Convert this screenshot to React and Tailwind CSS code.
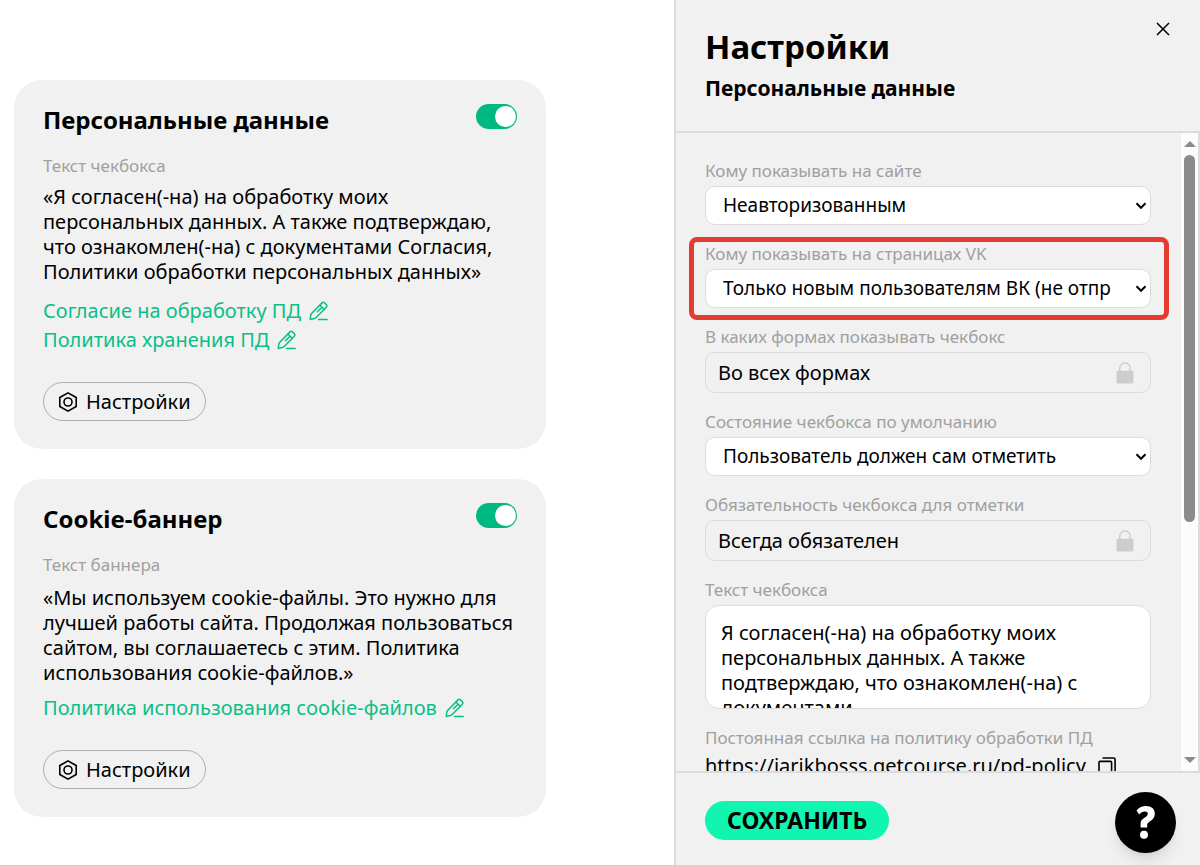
import React, { useState } from 'react';

const PencilIcon = () => (
  <svg className="h-5 w-5 shrink-0" viewBox="0 0 20 20" fill="none" stroke="currentColor" strokeWidth="1.5" strokeLinecap="round" strokeLinejoin="round">
    <path d="M1.2 18.4l.6-4.2a3.4 3.4 0 0 1 1-2L13 1.9a1.8 1.8 0 0 1 2.6 0l1.7 1.7a1.8 1.8 0 0 1 0 2.6L7.2 16.6a3.4 3.4 0 0 1-2 1z" />
    <path d="M11 4.2l4.2 4.2M8.4 10.8l3.6-3.6M9.6 18.6h8.6" />
  </svg>
);

const NutIcon = () => (
  <svg className="h-5 w-5 shrink-0" viewBox="0 0 20 20" fill="none" stroke="currentColor" strokeWidth="1.6" strokeLinejoin="round">
    <path d="M10 .9l8.2 4.6v9L10 19.1l-8.2-4.6v-9z" />
    <circle cx="10" cy="10" r="4" />
  </svg>
);

const LockIcon = () => (
  <svg className="h-[22px] w-[18px] shrink-0" viewBox="0 0 18 22" fill="none">
    <path d="M3.8 10V6.2a5.2 5.2 0 0 1 10.4 0V10" stroke="#cdcdcd" strokeWidth="1.4" />
    <rect x="0.5" y="8.8" width="17" height="12.7" rx="1.4" fill="#cdcdcd" />
  </svg>
);

const CopyIcon = () => (
  <svg className="h-[18px] w-[18px] shrink-0" viewBox="0 0 18 18" fill="none" stroke="currentColor" strokeWidth="1.6">
    <path d="M4.5 1h11a1.6 1.6 0 0 1 1.6 1.6V14" />
    <rect x="1" y="4.4" width="12.6" height="12.6" rx="1" />
  </svg>
);

const PolicyLink = ({ children }) => (
  <a href="#" className="flex items-center gap-2 text-xl leading-[29px] text-[#0abf86]">
    {children}
    <PencilIcon />
  </a>
);

const Card = ({ id, title, children }) => {
  const [enabled, setEnabled] = useState(true);

  return (
    <section className="rounded-[28px] bg-[#f1f1f1] px-[29px] pt-6 pb-7">
      <div className="flex items-start justify-between">
        <label htmlFor={id} className="text-2xl font-bold">{title}</label>
        <input
          id={id}
          type="checkbox"
          checked={enabled}
          onChange={() => setEnabled(!enabled)}
          className="h-[25px] w-[41px] appearance-none rounded-full bg-gray-400 p-0.5 before:block before:h-[21px] before:w-[21px] before:rounded-full before:bg-white checked:bg-[#00b981] checked:before:ml-[17px]"
        />
      </div>
      {children}
      <button className="mt-7 flex h-[39px] items-center gap-2 rounded-full border border-[#adadad] px-[14px] text-xl">
        <NutIcon />
        Настройки
      </button>
    </section>
  );
};

const Field = ({ id, label, highlighted, children }) => (
  <div className="relative flex flex-col gap-1">
    <label htmlFor={id} className="text-[17px] leading-[22px] text-[#a0a0a0]">{label}</label>
    {children}
    {highlighted && (
      <div className="pointer-events-none absolute -top-1.5 -right-[18px] -bottom-3 -left-4 rounded-lg border-5 border-[#e63b31]" />
    )}
  </div>
);

const SelectBox = ({ id, value }) => (
  <div className="relative">
    <select id={id} className="block h-[39px] w-full appearance-none rounded-[10px] border border-[#dcdcdc] bg-white pr-6 pl-[17px] text-[19px]">
      <option>{value}</option>
    </select>
    <svg className="pointer-events-none absolute top-4 right-1 h-2 w-3" viewBox="0 0 12 8" fill="none" stroke="black" strokeWidth="2">
      <path d="M1.5 1.3L6 5.8l4.5-4.5" />
    </svg>
  </div>
);

const LockedBox = ({ id, value }) => (
  <div className="flex h-[41px] items-center rounded-[10px] border border-[#dcdcdc] pr-4 pl-3">
    <input id={id} readOnly value={value} className="min-w-0 flex-1 bg-transparent text-xl outline-none" />
    <LockIcon />
  </div>
);

const SettingsPanel = () => (
  <aside className="flex w-[526px] shrink-0 flex-col border-l-2 border-[#dcdcdc] bg-[#f1f1f1]">
    <header className="flex h-[133px] shrink-0 items-start justify-between border-b-2 border-[#dcdcdc] pt-[22px] pr-[30px] pl-[29px]">
      <div>
        <h1 className="text-[33px] leading-[50px] font-bold">Настройки</h1>
        <h2 className="text-[21px] leading-8 font-bold">Персональные данные</h2>
      </div>
      <button aria-label="Закрыть">
        <svg className="h-[14px] w-[14px]" viewBox="0 0 14 14" stroke="black" strokeWidth="1.5">
          <path d="M1 1l12 12M13 1L1 13" />
        </svg>
      </button>
    </header>

    <div className="flex min-h-0 flex-1">
      <div className="flex min-w-0 flex-1 flex-col gap-[18px] overflow-hidden pt-[27px] pr-[30px] pl-[29px]">
        <Field id="site" label="Кому показывать на сайте">
          <SelectBox id="site" value="Неавторизованным" />
        </Field>
        <Field id="vk" label="Кому показывать на страницах VK" highlighted>
          <SelectBox id="vk" value="Только новым пользователям ВК (не отпр" />
        </Field>
        <Field id="forms" label="В каких формах показывать чекбокс">
          <LockedBox id="forms" value="Во всех формах" />
        </Field>
        <Field id="state" label="Состояние чекбокса по умолчанию">
          <SelectBox id="state" value="Пользователь должен сам отметить" />
        </Field>
        <Field id="required" label="Обязательность чекбокса для отметки">
          <LockedBox id="required" value="Всегда обязателен" />
        </Field>
        <Field id="text" label="Текст чекбокса">
          <textarea
            id="text"
            className="block h-[104px] resize-none overflow-hidden rounded-[14px] border border-[#dcdcdc] bg-white px-[15px] pt-[14px] text-xl leading-[25px]"
            defaultValue={'Я согласен(-на) на обработку моих\nперсональных данных. А также\nподтверждаю, что ознакомлен(-на) с\nдокументами'}
          />
        </Field>
        <div className="flex flex-col gap-1">
          <span className="text-[17px] leading-[22px] text-[#a0a0a0]">Постоянная ссылка на политику обработки ПД</span>
          <div className="flex items-center gap-3">
            <a href="#" className="text-xl leading-[26px]">https://iarikbosss.getcourse.ru/pd-policy</a>
            <button aria-label="Скопировать"><CopyIcon /></button>
          </div>
        </div>
      </div>

      {/* scrollbar */}
      <div className="flex w-[19px] flex-col items-center border-r-2 border-[#dcdcdc] bg-[#fcfcfc] pt-2 pb-2">
        <svg className="h-[6px] w-3" viewBox="0 0 12 6" fill="#8b8b8b"><path d="M0 6L6 0l6 6z" /></svg>
        <div className="mt-2 h-[367px] w-[11px] rounded-full bg-[#8b8b8b]" />
        <svg className="mt-auto h-[6px] w-3" viewBox="0 0 12 6" fill="#8b8b8b"><path d="M0 0l6 6 6-6z" /></svg>
      </div>
    </div>

    <footer className="flex h-[94px] shrink-0 items-start justify-between border-t-2 border-[#dcdcdc] pr-6 pl-[29px]">
      <button className="mt-7 h-[39px] rounded-full bg-[#10f5b0] px-[22px] text-[23px] font-bold">СОХРАНИТЬ</button>
      <button aria-label="Помощь" className="mt-[19px] flex h-[61px] w-[61px] items-center justify-center rounded-full bg-black text-white shadow-lg">
        <svg className="h-[33px] w-5" viewBox="0 0 20 33" fill="currentColor">
          <path d="M.5 4.4C3 1.4 6.3 0 10 0c5.2 0 8.8 3 8.8 7.4 0 5-3.4 7-6 8.8-1.2.9-1.6 1.6-1.6 2.8v2.6H4.6v-4.2c0-2.4 1.2-3.8 3.2-5.2 2-1.4 4-2.4 4-4.4 0-1.4-1-2.2-2.8-2.2-2.2 0-4.2 1-5.8 3z" />
          <circle cx="8" cy="28.8" r="4" />
        </svg>
      </button>
    </footer>
  </aside>
);

const App = () => {
  return (
    <div className="flex h-screen overflow-hidden bg-white font-['Noto_Sans',sans-serif] text-black">
      <main className="min-w-0 flex-1 pt-20 pl-[14px]">
        <div className="flex max-w-[532px] flex-col gap-[30px]">
          <Card id="personal" title="Персональные данные">
            <p className="mt-[19px] text-[17px] leading-[22px] text-[#a0a0a0]">Текст чекбокса</p>
            <p className="mt-[7px] mb-3 text-xl leading-[25px]">
              «Я согласен(-на) на обработку моих<br />
              персональных данных. А также подтверждаю,<br />
              что ознакомлен(-на) с документами Согласия,<br />
              Политики обработки персональных данных»
            </p>
            <PolicyLink>Согласие на обработку ПД</PolicyLink>
            <PolicyLink>Политика хранения ПД</PolicyLink>
          </Card>

          <Card id="cookie" title="Cookie-баннер">
            <p className="mt-[19px] text-[17px] leading-[22px] text-[#a0a0a0]">Текст баннера</p>
            <p className="mt-[9px] mb-2 text-xl leading-[25px]">
              «Мы используем cookie-файлы. Это нужно для<br />
              лучшей работы сайта. Продолжая пользоваться<br />
              сайтом, вы соглашаетесь с этим. Политика<br />
              использования cookie-файлов.»
            </p>
            <PolicyLink>Политика использования cookie-файлов</PolicyLink>
          </Card>
        </div>
      </main>
      <SettingsPanel />
    </div>
  );
};

export default App;
